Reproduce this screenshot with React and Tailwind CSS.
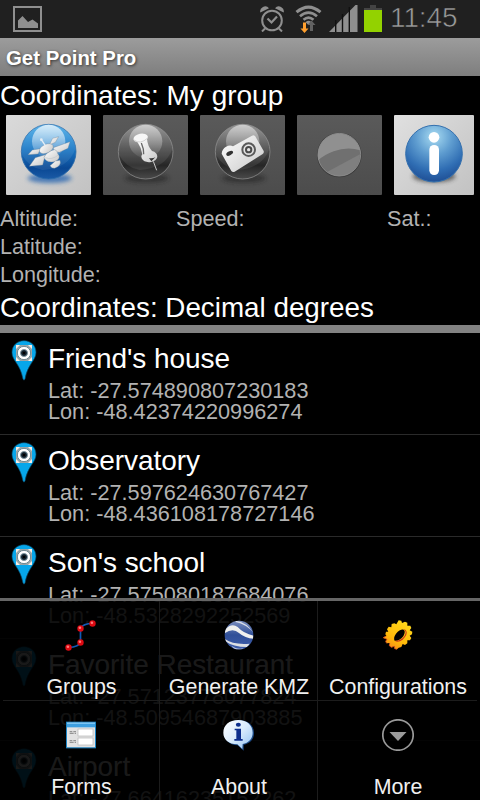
import React from 'react';

const points = [
    { name: "Friend's house", lat: '-27.574890807230183', lon: '-48.42374220996274' },
    { name: 'Observatory', lat: '-27.597624630767427', lon: '-48.436108178727146' },
    { name: "Son's school", lat: '-27.575080187684076', lon: '-48.5328292252569' },
    { name: 'Favorite Restaurant', lat: '-27.57123778077824', lon: '-48.50954687903885' },
    { name: 'Airport', lat: '-27.66416235152262', lon: '-48.54736328125' },
];

const StatusBar = () => (
    <div className="flex h-[38px] shrink-0 items-center bg-[#202020]">
        <svg className="ml-[13px] h-[26px] w-[29px]" viewBox="0 0 29 26">
            <rect x="1" y="1" width="27" height="24" fill="none" stroke="#8f8f8f" strokeWidth="2" />
            <path d="M5 22V14.500L9.500 10l5.500 6 4.500-2.500 5.500 4V22z" fill="#8f8f8f" />
        </svg>

        {/* Alarm */}
        <svg className="ml-[218px] h-[26px] w-[24px]" viewBox="0 0 24 26" fill="none" stroke="#8f8f8f">
            <circle cx="12" cy="14.500" r="9.800" strokeWidth="2" />
            <path d="M7.500 12.500l4 4 5.500-6" strokeWidth="2.200" />
            <path d="M5 22.500l-3 3M19 22.500l3 3" strokeWidth="2" />
            <path d="M.3 6.500A5 5 0 0 1 9 2.200zM23.700 6.500A5 5 0 0 0 15 2.200z" fill="#8f8f8f" stroke="none" />
        </svg>

        {/* Wifi with traffic arrows */}
        <svg className="-mt-[1px] ml-[11px] h-[28px] w-[27px]" viewBox="0 0 27 28" fill="none" stroke="#8f8f8f">
            <path d="M1.500 7.200Q13.500-3 25.500 7.200" strokeWidth="3" />
            <path d="M5 11.200Q13.500 4 22 11.200" strokeWidth="2.700" />
            <path d="M8.500 14.800Q13.500 10.500 18.500 14.800" strokeWidth="2.500" />
            <path d="M10.500 17.200Q13.500 14.500 16.500 17.200L13.500 20z" fill="#8f8f8f" stroke="none" />
            <path d="M8 17.500h3v6h2.500l-4 4.500-4-4.500H8z" fill="#ff9f2e" stroke="none" />
            <path d="M15 26v-6h-2.500l4-4.500 4 4.500H18v6z" fill="#626262" stroke="none" />
        </svg>

        {/* Signal */}
        <svg className="-mt-[1px] ml-[7px] h-[27px] w-[29px]" viewBox="0 0 29 27">
            <path d="M0 27L26.500 0H28.500V27z" fill="#8f8f8f" />
            <path d="M6.700 15v13M13.500 9v18M20.300 2v25" stroke="#101010" strokeWidth="1.400" />
        </svg>

        {/* Battery */}
        <div className="-mt-[1px] ml-[6px] flex w-[18px] flex-col items-center">
            <div className="h-[3px] w-[6px] bg-[#444444]" />
            <div className="h-[2px] w-full bg-[#444444]" />
            <div className="h-[22px] w-full bg-[#93d200]" />
        </div>

        <span className="-mt-[3px] ml-[8px] text-[28px] leading-none tracking-[-0.100px] text-[#9c9c9c] [-webkit-text-stroke:0.600px_#202020]">
            11:45
        </span>
    </div>
);

const Gradients = () => (
    <svg className="absolute h-0 w-0" aria-hidden="true">
        <defs>
            <linearGradient id="blueBall" x1="0" y1="0" x2="0" y2="1">
                <stop offset="0" stopColor="#4fb0ea" />
                <stop offset="0.450" stopColor="#1a78c6" />
                <stop offset="0.800" stopColor="#0a4894" />
                <stop offset="1" stopColor="#1a5aa6" />
            </linearGradient>
            <linearGradient id="darkBall" x1="0" y1="0" x2="0" y2="1">
                <stop offset="0" stopColor="#8e8e8e" />
                <stop offset="0.450" stopColor="#4c4c4c" />
                <stop offset="0.750" stopColor="#262626" />
                <stop offset="1" stopColor="#4a4a4a" />
            </linearGradient>
            <linearGradient id="shine" x1="0" y1="0" x2="0" y2="1">
                <stop offset="0" stopColor="#fff" stopOpacity="0.750" />
                <stop offset="1" stopColor="#fff" stopOpacity="0.080" />
            </linearGradient>
            <linearGradient id="metal" x1="0" y1="0" x2="1" y2="1">
                <stop offset="0" stopColor="#ffffff" />
                <stop offset="1" stopColor="#c8c8c8" />
            </linearGradient>
            <radialGradient id="infoBall" cx="0.500" cy="0.200" r="0.800">
                <stop offset="0" stopColor="#a9dcf2" />
                <stop offset="0.400" stopColor="#5f9dd0" />
                <stop offset="0.750" stopColor="#2f6db3" />
                <stop offset="1" stopColor="#1f4f95" />
            </radialGradient>
            <filter id="soft" x="-30%" y="-80%" width="160%" height="260%">
                <feGaussianBlur stdDeviation="6" />
            </filter>
        </defs>
    </svg>
);

const Ball = ({ blue }) => (
    <>
        <ellipse cx="131" cy="190" rx="66" ry="14" fill={blue ? '#2a66b0' : '#1c1c1c'} opacity={blue ? 0.8 : 0.5} filter="url(#soft)" />
        <circle cx="128" cy="110" r="82" fill={blue ? 'url(#blueBall)' : 'url(#darkBall)'} stroke={blue ? '#2b6cab' : '#858585'} strokeWidth="2.500" />
        <path d="M47 118A81 81 0 0 1 209 98Q190 160 110 165Q70 160 47 118z" fill="#fff" opacity="0.080" />
        <circle cx="128" cy="79" r="50" fill="url(#shine)" opacity={blue ? 1 : 0.7} />
    </>
);

const SatelliteIcon = () => (
    <svg className="h-[80px] w-[85px]" viewBox="0 0 255 240">
        <Ball blue />
        <g fill="url(#metal)" stroke="#6b7f92" strokeWidth="1">
            <path d="M130 90L140 70L158 65L148 82z" />
            <path d="M142 98L192 80L186 100L160 112L145 110z" />
            <path d="M66 119L79 105L104 101L96 117z" />
            <path d="M70 154L88 128L118 119L110 150z" />
            <path d="M114 128Q122 108 146 104Q156 108 155 116Q162 122 159 130Q150 143 135 141Q119 140 114 128z" />
            <ellipse cx="121" cy="101" rx="22" ry="13" transform="rotate(-25 121 101)" />
            <path d="M132 152Q140 146 148 138L162 136Q168 152 146 160Q136 160 132 152z" />
        </g>
        <path d="M106 74L118 92" stroke="#e6eef5" strokeWidth="4" />
        <circle cx="106" cy="74" r="4" fill="#e6eef5" />
        <path d="M118 128Q138 136 157 120" stroke="#b4bec6" strokeWidth="1.500" fill="none" />
    </svg>
);

const PinIcon = () => (
    <svg className="h-[80px] w-[85px]" viewBox="0 0 255 240">
        <Ball />
        <path d="M151 139L161 166" stroke="#c8c8c8" strokeWidth="3" />
        <path d="M103 80L132 72Q134 94 147 108Q163 112 163 126Q160 138 144 141Q124 144 116 130Q112 124 118 118Q114 96 103 80z" fill="url(#metal)" />
        <path d="M115 84Q123 102 122 118" stroke="#666" strokeWidth="4" fill="none" />
        <path d="M138 129L145 139L157 127Q148 131 138 129z" fill="#333" />
        <ellipse cx="113" cy="69" rx="22" ry="13" fill="#f7f7f7" transform="rotate(-12 113 69)" />
        <path d="M93 75Q112 90 134 69" stroke="#aaaaaa" strokeWidth="1.500" fill="none" />
    </svg>
);

const CameraIcon = () => (
    <svg className="h-[80px] w-[85px]" viewBox="0 0 255 240">
        <Ball />
        <path d="M65 116Q66 102 78 95Q90 88 99 94L156 62Q163 58 167 66L191 108Q193 114 187 118L104 170Q98 173 94 168z" fill="url(#metal)" />
        <ellipse cx="89" cy="115" rx="11" ry="6" fill="#333" transform="rotate(-28 89 115)" />
        <circle cx="146" cy="104" r="19" fill="none" stroke="#5a5a5a" strokeWidth="6" />
        <circle cx="146" cy="104" r="8" fill="none" stroke="#4a4a4a" strokeWidth="6" />
    </svg>
);

const RecordIcon = () => (
    <svg className="h-[80px] w-[85px]" viewBox="0 0 255 240">
        <circle cx="127" cy="120" r="67" fill="#3c3c3c" />
        <circle cx="127" cy="119" r="64" fill="#707070" stroke="#a0a0a0" strokeWidth="2" />
        <path d="M64 136A64 64 0 1 1 190 106Q150 94 110 109Q80 120 64 136z" fill="#909090" />
        <path d="M90 171L189 118Q188 160 150 180Q116 190 90 171z" fill="#888888" opacity="0.600" />
    </svg>
);

const InfoIcon = () => (
    <svg className="h-[80px] w-[80px]" viewBox="0 0 240 240">
        <ellipse cx="120" cy="184" rx="64" ry="18" fill="#333" opacity="0.700" filter="url(#soft)" />
        <circle cx="120" cy="116" r="85" fill="url(#infoBall)" stroke="#3470ae" strokeWidth="3" />
        <circle cx="120" cy="67" r="16" fill="#fff" />
        <rect x="106" y="90" width="29" height="90" rx="14" fill="#fff" />
    </svg>
);

const Toolbar = () => (
    <div className="flex h-[80px] shrink-0 gap-[12px] px-[6px]">
        <div className="w-[85px] rounded-[1px] bg-linear-to-br from-[#dadada] to-[#c2c2c2]"><SatelliteIcon /></div>
        <div className="w-[85px] rounded-[1px] bg-linear-to-b from-[#5a5a5a] to-[#4c4c4c]"><PinIcon /></div>
        <div className="w-[85px] rounded-[1px] bg-linear-to-b from-[#5a5a5a] to-[#4c4c4c]"><CameraIcon /></div>
        <div className="w-[85px] rounded-[1px] bg-linear-to-b from-[#5a5a5a] to-[#4c4c4c]"><RecordIcon /></div>
        <div className="w-[80px] rounded-[1px] bg-linear-to-br from-[#e0e0e0] to-[#c2c2c2]"><InfoIcon /></div>
    </div>
);

const MarkerIcon = () => (
    <svg className="mt-[7px] h-[41px] w-[26px] shrink-0" viewBox="0 0 78 123">
        <path d="M39 2C60 2 75 17 75 37C75 62 50 72 42 117Q39 124 36 117C28 72 3 62 3 37C3 17 18 2 39 2z" fill="#06a6ea" stroke="#0b4a68" strokeWidth="2" />
        <rect x="15" y="15" width="48" height="48" fill="#9aa5a8" />
        <path d="M15 15h12L15 27zM63 15v12L51 15zM15 63V51l12 12zM63 63H51l12-12z" fill="#f6eee6" />
        <path d="M22 32L32 22M46 22L56 32M22 46L32 56M56 46L46 56" stroke="#e9e4de" strokeWidth="4" />
        <circle cx="39" cy="39" r="20" fill="#fff" stroke="#6d8790" strokeWidth="3" />
        <circle cx="39" cy="39" r="10.500" fill="#10202c" stroke="#7f98a3" strokeWidth="3" />
        <circle cx="39" cy="39" r="4" fill="#000" />
    </svg>
);

const PointRow = ({ point }) => (
    <div className="flex h-[102px] shrink-0 border-b border-[#2a2a2a] pl-[11px]">
        <MarkerIcon />
        <div className="ml-[11px] pt-[10px]">
            <h3 className="text-[28px] leading-[32px] tracking-[-0.050px] text-white">{point.name}</h3>
            <p className="mt-[5px] text-[21.700px] leading-[21px] text-[#b2b2b2]">Lat: {point.lat}</p>
            <p className="text-[21.700px] leading-[21px] text-[#b2b2b2]">Lon: {point.lon}</p>
        </div>
    </div>
);

const GroupsIcon = () => (
    <svg className="h-[32px] w-[32px]" viewBox="0 0 32 32">
        <path d="M3.500 28.500Q14 28 15.500 23V9.500Q18 4.500 27.500 4.500" fill="none" stroke="#1159b5" strokeWidth="1.700" />
        {[[3.5, 28.5], [15.5, 23.5], [15.5, 9.5], [27.5, 4.5]].map(([x, y]) => (
            <g key={y}>
                <circle cx={x} cy={y} r="3.200" fill="#dd0a12" />
                <circle cx={x - 0.6} cy={y - 0.8} r="1.300" fill="#ff7a7a" />
            </g>
        ))}
    </svg>
);

const EarthIcon = () => (
    <svg className="h-[32px] w-[32px]" viewBox="0 0 96 96">
        <defs>
            <linearGradient id="earth" x1="0" y1="0" x2="0" y2="1">
                <stop offset="0" stopColor="#8496c4" />
                <stop offset="0.500" stopColor="#304f98" />
                <stop offset="1" stopColor="#3f5fae" />
            </linearGradient>
            <clipPath id="earthClip"><circle cx="48" cy="48" r="43" /></clipPath>
        </defs>
        <g clipPath="url(#earthClip)">
            <rect width="96" height="96" fill="url(#earth)" />
            <path d="M6 32Q26 10 44 24Q62 44 92 50V59Q66 58 48 42Q30 26 6 42z" fill="#f0f0ee" />
            <path d="M38 5Q72 10 90 40Q70 16 38 9z" fill="#d9dde6" />
            <path d="M6 60Q30 78 80 74L72 84Q30 84 6 66z" fill="#dcdfe4" />
            <path d="M26 80Q40 92 62 88L50 94Q32 92 26 80z" fill="#b8c2da" />
        </g>
    </svg>
);

const GearIcon = () => (
    <svg className="h-[32px] w-[32px]" viewBox="0 0 96 96">
        <defs>
            <linearGradient id="gear" x1="0.800" y1="0" x2="0.200" y2="1">
                <stop offset="0" stopColor="#ffdc1c" />
                <stop offset="0.650" stopColor="#ffb80a" />
                <stop offset="1" stopColor="#f5861a" />
            </linearGradient>
        </defs>
        <path
            fillRule="evenodd"
            fill="url(#gear)"
            d="M50 4L58 5L60 12L69 8L76 11L76 20L85 20L88 27L83 34L91 38L90 46L83 50L88 57L84 64L76 64L76 73L69 78L62 75L58 84L50 86L45 91L38 89L37 82L28 85L22 80L23 72L14 73L11 67L15 61L3 56L13 50L10 46L12 38L19 38L15 31L20 23L28 25L29 15L37 13L43 16zM38 65Q52 67 64 52Q72 36 65 32Q54 30 42 44Q33 57 38 65z"
        />
        <path d="M65 32Q76 36 67 52Q54 68 38 65Q48 72 62 62Q78 46 73 36Q70 31 65 32z" fill="#c9301c" />
        <path d="M14 73L11 67L15 61L4 56L13 51M45 91L38 89L37 82L28 85L22 80L23 73" fill="none" stroke="#d9501a" strokeWidth="2.500" />
    </svg>
);

const FormsIcon = () => (
    <svg className="h-[32px] w-[32px]" viewBox="0 0 96 96">
        <rect x="4.500" y="9.500" width="87" height="77" fill="#e2e2e2" stroke="#1b86c8" strokeWidth="3" />
        <rect x="6" y="11" width="84" height="14" fill="#3d9fe0" />
        <rect x="6" y="11" width="84" height="4" fill="#7cc4f2" />
        <rect x="39" y="30" width="45" height="21" fill="#fff" stroke="#b5b5b5" strokeWidth="2" />
        <rect x="39" y="57" width="45" height="21" fill="#fff" stroke="#b5b5b5" strokeWidth="2" />
        <path d="M14 38h8M25 38h8M14 43h12M29 43h4M14 65h8M25 65h8M14 70h12M29 70h4" stroke="#555" strokeWidth="2" />
    </svg>
);

const AboutIcon = () => (
    <svg className="h-[32px] w-[32px]" viewBox="0 0 96 96">
        <defs>
            <linearGradient id="bubble" x1="0" y1="0" x2="1" y2="1">
                <stop offset="0" stopColor="#ffffff" />
                <stop offset="0.500" stopColor="#d9ebfc" />
                <stop offset="1" stopColor="#8fc0f2" />
            </linearGradient>
        </defs>
        <path d="M48 4C76 4 93 20 93 42C93 62 80 74 62 77L62 95L44 79C18 78 4 62 4 42C4 20 22 4 48 4z" fill="#1c4a86" />
        <path d="M46 3C72 3 89 19 89 41C89 60 77 71 59 75L58 90L43 76C16 75 1 61 1 41C1 19 18 3 46 3z" fill="url(#bubble)" />
        <ellipse cx="46" cy="17" rx="7.500" ry="6" fill="#0b2d8c" />
        <path d="M35 29H54V60H59V65H34V60H40V34H35z" fill="#0b2d8c" />
    </svg>
);

const MoreIcon = () => (
    <svg className="h-[32px] w-[32px]" viewBox="0 0 32 32">
        <circle cx="16" cy="16" r="15.200" fill="none" stroke="#9a9a9a" strokeWidth="1.700" />
        <path d="M7.500 13H24.500L16 22z" fill="#9a9a9a" />
    </svg>
);

const menuItems = [
    { label: 'Groups', icon: <GroupsIcon /> },
    { label: 'Generate KMZ', icon: <EarthIcon /> },
    { label: 'Configurations', icon: <GearIcon /> },
    { label: 'Forms', icon: <FormsIcon /> },
    { label: 'About', icon: <AboutIcon /> },
    { label: 'More', icon: <MoreIcon /> },
];

const OptionsMenu = () => (
    <div className="absolute inset-x-0 bottom-0 h-[202px] border-t-[3px] border-[#666666] bg-black/90 px-[3px]">
        <div className="grid grid-cols-[157px_158px_159px] grid-rows-[100px_100px]">
            {menuItems.map((item, i) => (
                <div
                    key={item.label}
                    className={`flex flex-col items-center border-[#1c1c1c] pt-[18px] ${i < 3 ? 'border-b' : ''} ${i % 3 < 2 ? 'border-r' : ''}`}
                >
                    {item.icon}
                    <span className="mt-[24px] pl-px text-[21.400px] leading-[24px] whitespace-nowrap text-[#f0f0f0]">
                        {item.label}
                    </span>
                </div>
            ))}
        </div>
    </div>
);

const App = () => {
    return (
        <div className="relative flex h-[800px] w-[480px] flex-col overflow-hidden bg-black font-['Liberation_Sans',Arial,sans-serif]">
            <Gradients />
            <StatusBar />

            {/* Title bar */}
            <div className="h-[38px] shrink-0 bg-linear-to-b from-[#9c9c9c] to-[#7e7e7e] pl-[6px]">
                <h1 className="pt-px text-[20.400px] leading-[38px] font-bold text-white [text-shadow:1px_1px_3px_#333]">
                    Get Point Pro
                </h1>
            </div>

            <h2 className="h-[39px] shrink-0 text-[28px] leading-[40px] text-white">
                Coordinates: My group
            </h2>
            <Toolbar />

            {/* Live readings */}
            <div className="mt-[10px] shrink-0 text-[21.600px] leading-[28px] text-[#b2b2b2]">
                <div className="flex">
                    <span className="w-[176px]">Altitude:</span>
                    <span className="w-[211px]">Speed:</span>
                    <span>Sat.:</span>
                </div>
                <div>Latitude:</div>
                <div>Longitude:</div>
            </div>
            <h2 className="h-[36px] shrink-0 text-[27.800px] leading-[38px] text-white">
                Coordinates: Decimal degrees
            </h2>
            <div className="h-[8px] shrink-0 bg-[#828282]" />

            {points.map((point) => (
                <PointRow key={point.name} point={point} />
            ))}

            <OptionsMenu />
        </div>
    );
};

export default App;
